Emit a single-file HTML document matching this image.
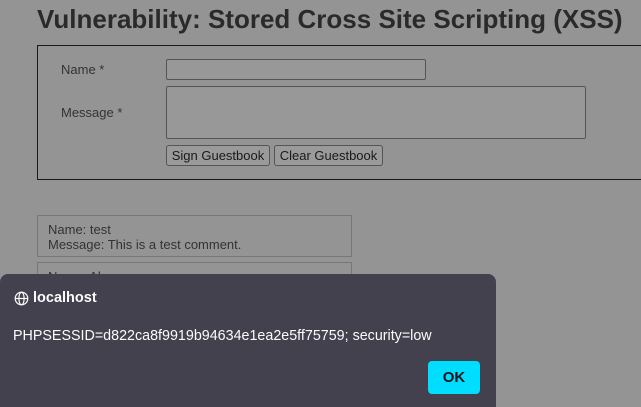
<!DOCTYPE html>
<html><head><style>
html,body{margin:0;width:641px;height:407px;overflow:hidden}
body{background:#949494;font-family:"Liberation Sans",sans-serif;position:relative;color:#222}
.a{position:absolute}
h1{position:absolute;left:37px;top:4px;margin:0;font-size:26px;font-weight:bold;color:#2a2a2a;white-space:nowrap}
.form{left:37px;top:45px;width:620px;height:133px;border:1px solid #1a1a1a}
.lbl{font-size:13px;color:#333}
.in{border:1px solid #555;border-radius:2px;background:#989898}
.btn{border:1px solid #555;border-radius:3px;background:#9a9a9a;font-size:13px;color:#1a1a1a;text-align:center;line-height:19px;height:19px}
.c{left:37px;width:315px;border:1px solid #777;font-size:13px;color:#333;padding:6px 0 0 10px;box-sizing:border-box;line-height:15px}
.dlg{left:0;top:274px;width:496px;height:133px;background:#42414d;border-radius:8px 8px 0 0;color:#fbfbfe;font-family:"Liberation Sans",sans-serif}
</style></head><body>
<h1>Vulnerability: Stored Cross Site Scripting (XSS)</h1>
<div class="a form"></div>
<div class="a lbl" style="left:61px;top:62px">Name *</div>
<div class="a lbl" style="left:61px;top:105px">Message *</div>
<div class="a in" style="left:166px;top:59px;width:258px;height:19px"></div>
<div class="a in" style="left:166px;top:86px;width:418px;height:51px"></div>
<div class="a btn" style="left:166px;top:145px;width:102px">Sign Guestbook</div>
<div class="a btn" style="left:274px;top:145px;width:107px">Clear Guestbook</div>
<div class="a c" style="top:215px;height:42px">Name: test<br>Message: This is a test comment.</div>
<div class="a c" style="top:262px;height:30px">Name: Alvaro</div>
<div class="a dlg">
<svg class="a" style="left:14px;top:17px" width="15" height="15" viewBox="0 0 16 16" fill="none" stroke="#fbfbfe" stroke-width="1.3"><circle cx="8" cy="8" r="6.7"/><ellipse cx="8" cy="8" rx="2.8" ry="6.7"/><path d="M1.3 8h13.4"/></svg>
<div class="a" style="left:33px;top:16px;font-size:14.5px;font-weight:bold">localhost</div>
<div class="a" style="left:13px;top:54px;font-size:14.3px;white-space:nowrap">PHPSESSID=d822ca8f9919b94634e1ea2e5ff75759; security=low</div>
<div class="a" style="left:428px;top:87px;width:52px;height:33px;background:#00ddff;border-radius:4px;color:#15141a;font-size:15px;font-weight:bold;text-align:center;line-height:33px">OK</div>
</div>
</body></html>
